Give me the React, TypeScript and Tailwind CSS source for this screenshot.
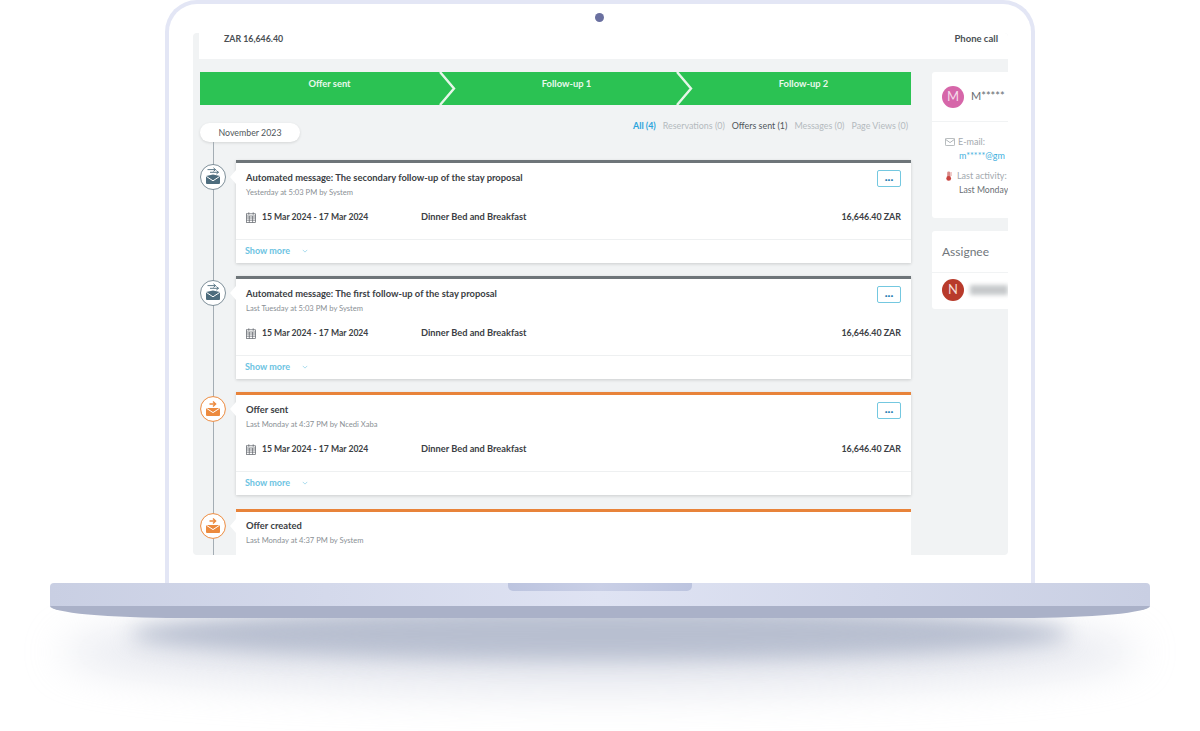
import React from "react";

const font = "font-['Lato','Noto_Sans',sans-serif]";

const GreyMail = () => (
  <svg viewBox="0 0 26 26" className="h-[26px] w-[26px]">
    <circle cx="13" cy="13" r="12.5" fill="#fff" stroke="#5f7480" strokeWidth="0.8" />
    <path d="M6 12 13 10.4l7 1.6v7a1 1 0 0 1-1 1H7a1 1 0 0 1-1-1z" fill="#4d6c7d" />
    <path d="M6.3 12.4 13 16.8l6.7-4.4" fill="none" stroke="#fff" strokeWidth="1" />
    <path d="M7.5 5.6h8M13.4 3.8l2.2 1.8-2.2 1.8M10 8.3h8.5M16.3 6.5l2.2 1.8-2.2 1.8" fill="none" stroke="#4d6c7d" strokeWidth="0.9" />
  </svg>
);

const OrangeMail = () => (
  <svg viewBox="0 0 26 26" className="h-[26px] w-[26px]">
    <circle cx="13" cy="13" r="12.4" fill="#fff" stroke="#ec8a3e" strokeWidth="1" />
    <path d="M6 12h14v7a1 1 0 0 1-1 1H7a1 1 0 0 1-1-1z" fill="#ec8a3e" />
    <path d="M6.3 12.2 13 16.6l6.7-4.4" fill="none" stroke="#fff" strokeWidth="1" />
    <path d="M9.5 8h6M13 5.6 15.6 8 13 10.4" fill="none" stroke="#ec8a3e" strokeWidth="1.4" />
  </svg>
);

const Calendar = () => (
  <svg viewBox="0 0 10 11" className="h-[11px] w-[10px]" fill="none" stroke="#5a5f65" strokeWidth="0.7">
    <rect x="0.5" y="1.8" width="9" height="8.7" />
    <path d="M.5 4h9M.5 6h9M.5 8.2h9M3.3 4v6.5M6.6 4v6.5M2.8.3v2.4M7.2.3v2.4" />
  </svg>
);

type CardProps = {
  title: string;
  sub: string;
  orange?: boolean;
  cut?: boolean;
};

const Card = ({ title, sub, orange, cut }: CardProps) => (
  <div className={`flex ${cut ? "mt-px" : ""}`}>
    <div className="w-9 shrink-0 pt-[4px]">
      <div className="relative z-10 h-[26px] w-[26px]">{orange ? <OrangeMail /> : <GreyMail />}</div>
    </div>
    <div
      className={`relative w-[675px] border-t-[3px] bg-white ${
        orange ? "border-[#e8833a]" : "border-[#6e7579]"
      } ${cut ? "h-[46px]" : "h-[103px] shadow-[0_1px_3px_rgba(0,0,0,0.16)]"}`}
    >
      <span className="absolute left-[-6px] top-[7px] h-0 w-0 border-y-[7px] border-r-[6px] border-y-transparent border-r-white" />
      <div className={`flex justify-between pl-[10px] pr-[10px] ${cut ? "pt-[7px]" : "pt-[8px]"}`}>
        <div>
          <p className="text-[9.4px] leading-[14px] font-bold text-[#3b4044]">{title}</p>
          <p className="text-[7.6px] leading-[14px] text-[#8a9095]">{sub}</p>
        </div>
        {!cut && (
          <div className="-mt-px flex h-[17px] w-[24px] items-center justify-center rounded-[2px] border border-[#74c8e0] text-[10px] leading-none font-black text-[#2b7fb4]">
            ···
          </div>
        )}
      </div>
      {!cut && (
        <>
          <div className="mt-[11px] flex items-center pl-[10px] pr-[10px] text-[9px] leading-[14px] font-bold text-[#3b4044]">
            <Calendar />
            <span className="ml-[6px] w-[159px] text-[8.6px]">15 Mar 2024 - 17 Mar 2024</span>
            <span className="text-[9.25px]">Dinner Bed and Breakfast</span>
            <span className="ml-auto text-[8.9px]">16,646.40 ZAR</span>
          </div>
          <div className="mt-[15px] flex h-[23px] items-center border-t border-[#eef0f1] pl-[9px]">
            <span className="text-[9px] font-bold text-[#6cc3e2]">Show more</span>
            <svg viewBox="0 0 8 5" className="ml-[12px] h-[4px] w-[6px]" fill="none" stroke="#8fd0e8" strokeWidth="1">
              <path d="M1 1l3 3 3-3" />
            </svg>
          </div>
        </>
      )}
    </div>
  </div>
);

const Step = ({ label, arrow }: { label: string; arrow?: boolean }) => (
  <div className="relative h-[33px] flex-1 bg-[#2bc253] pl-[22px] pt-[5px] text-center text-[9.4px] leading-[14px] font-bold text-[#e9f8ec]">
    {label}
    {arrow && (
      <svg viewBox="0 0 18 33" className="absolute right-[-20px] top-0 z-10 h-[33px] w-[18px]" fill="none" stroke="#e6f6e9" strokeWidth="2.4">
        <path d="M1 0l14 16.5L1 33" />
      </svg>
    )}
  </div>
);

export default function App() {
  return (
    <div className={`relative flex h-[731px] w-[1200px] flex-col items-center overflow-hidden bg-white ${font}`}>
      {/* soft shadow under the base */}
      <div className="absolute left-[60px] top-[612px] h-[80px] w-[1080px] rounded-[50%] bg-[#ccd0de] opacity-50 blur-[20px]" />
      <div className="absolute left-[130px] top-[608px] h-[52px] w-[940px] rounded-[50%] bg-[#b8bfd0] blur-[10px]" />

      {/* lid */}
      <div className="relative h-[583px] w-[870px] rounded-t-[32px] border-x-4 border-t-4 border-[#e3e6f5] bg-white pl-6 pr-[23px] pt-[29px]">
        <span className="absolute left-[426px] top-[9px] h-[9px] w-[9px] rounded-full bg-[#6a70a0] blur-[0.5px]" />

        <div className="flex h-[522px] flex-col overflow-hidden rounded-[4px] bg-[#f1f3f4]">
          <div className="ml-[6px] flex h-[26px] shrink-0 items-start justify-between bg-white pl-[25px] pr-[10px] text-[9.5px] leading-[11px] font-bold text-[#4a4f54]">
            <span className="text-[8.8px]">ZAR 16,646.40</span>
            <span>Phone call</span>
          </div>

          <div className="flex min-h-0 flex-1 gap-[21px] pl-[7px] pt-[13px]">
            {/* main column */}
            <div className="w-[711px] shrink-0">
              <div className="flex">
                <Step label="Offer sent" arrow />
                <Step label="Follow-up 1" arrow />
                <Step label="Follow-up 2" />
              </div>

              <div className="flex items-start justify-between pr-[3px] pt-[14px]">
                <div className="mt-[4px] flex h-[19px] w-[100px] items-center justify-center rounded-full bg-white text-[8.8px] text-[#50565b] shadow-[0_1px_3px_rgba(0,0,0,0.12)]">
                  November 2023
                </div>
                <div className="flex gap-[7px] text-[8.9px] leading-[14px] text-[#b4babe]">
                  <span className="font-bold text-[#2ba4dc]">All (4)</span>
                  <span>Reservations (0)</span>
                  <span className="text-[#50565b]">Offers sent (1)</span>
                  <span>Messages (0)</span>
                  <span>Page Views (0)</span>
                </div>
              </div>

              <div className="relative flex flex-col gap-[13px] pt-[18px]">
                <span className="absolute bottom-0 left-[13px] top-0 w-px bg-[#a4adb4]" />
                <Card title="Automated message: The secondary follow-up of the stay proposal" sub="Yesterday at 5:03 PM by System" />
                <Card title="Automated message: The first follow-up of the stay proposal" sub="Last Tuesday at 5:03 PM by System" />
                <Card title="Offer sent" sub="Last Monday at 4:37 PM by Ncedi Xaba" orange />
                <Card title="Offer created" sub="Last Monday at 4:37 PM by System" orange cut />
              </div>
            </div>

            {/* side column, cut off by the screen edge */}
            <div className="flex w-[76px] shrink-0 flex-col gap-[13px] overflow-hidden whitespace-nowrap">
              <div className="h-[146px] rounded-l-[3px] bg-white">
                <div className="flex h-[50px] items-center gap-[7px] border-b border-[#f1f3f4] pl-[10px]">
                  <div className="flex h-[22px] w-[22px] shrink-0 items-center justify-center rounded-full bg-[#d666a9] text-[13px] text-[#f5dbe9]">M</div>
                  <span className="text-[11px] text-[#666b70]">M*****</span>
                </div>
                <div className="pl-[13px] pt-[13px] text-[9px] leading-[14px]">
                  <div className="flex items-center gap-[3px] text-[#a3a9ae]">
                    <svg viewBox="0 0 10 8" className="h-[8px] w-[10px]" fill="none" stroke="#8e959a" strokeWidth="0.7">
                      <rect x="0.4" y="0.4" width="9.2" height="7.2" rx="1" />
                      <path d="M.6 1.4 5 4.6l4.4-3.2" />
                    </svg>
                    E-mail:
                  </div>
                  <div className="pl-[14px] text-[#3fb0de]">m*****@gm</div>
                  <div className="mt-[6px] flex items-center gap-[5px] text-[#a3a9ae]">
                    <svg viewBox="0 0 6 10" className="ml-[1px] h-[10px] w-[6px]">
                      <rect x="1.2" y="0.4" width="3" height="6.6" rx="1.4" fill="#d98a88" />
                      <circle cx="2.7" cy="7.4" r="2.4" fill="#c9433f" />
                      <path d="M4.4 2h1.4M4.4 4h1.4" stroke="#c9433f" strokeWidth="0.7" />
                    </svg>
                    Last activity:
                  </div>
                  <div className="pl-[14px] text-[8.7px] text-[#6b7075]">Last Monday</div>
                </div>
              </div>
              <div className="h-[78px] rounded-l-[3px] bg-white">
                <div className="flex h-[42px] items-center border-b border-[#f1f3f4] pl-[10px] text-[12px] text-[#70767b]">Assignee</div>
                <div className="flex items-center gap-[6px] pl-[10px] pt-[6px]">
                  <div className="flex h-[22px] w-[22px] shrink-0 items-center justify-center rounded-full bg-[#b83a2b] text-[13px] text-[#f4d8d3]">N</div>
                  <div className="h-[10px] w-[50px] bg-[#c6c9cb] blur-[2px]" />
                </div>
              </div>
            </div>
          </div>
        </div>
      </div>

      {/* base */}
      <div className="relative z-10 h-[23px] w-[1100px] rounded-t-[4px] bg-gradient-to-r from-[#c9cfe3] via-[#dfe3f3] to-[#c9cfe3]">
        <div className="mx-auto h-[8px] w-[184px] rounded-b-[5px] bg-gradient-to-r from-[#bcc4df] via-[#c9cfe6] to-[#bcc4df]" />
      </div>
      <div className="relative z-10 h-[12px] w-[1100px] rounded-b-[130px_12px] bg-[#aab1c8]" />
    </div>
  );
}
